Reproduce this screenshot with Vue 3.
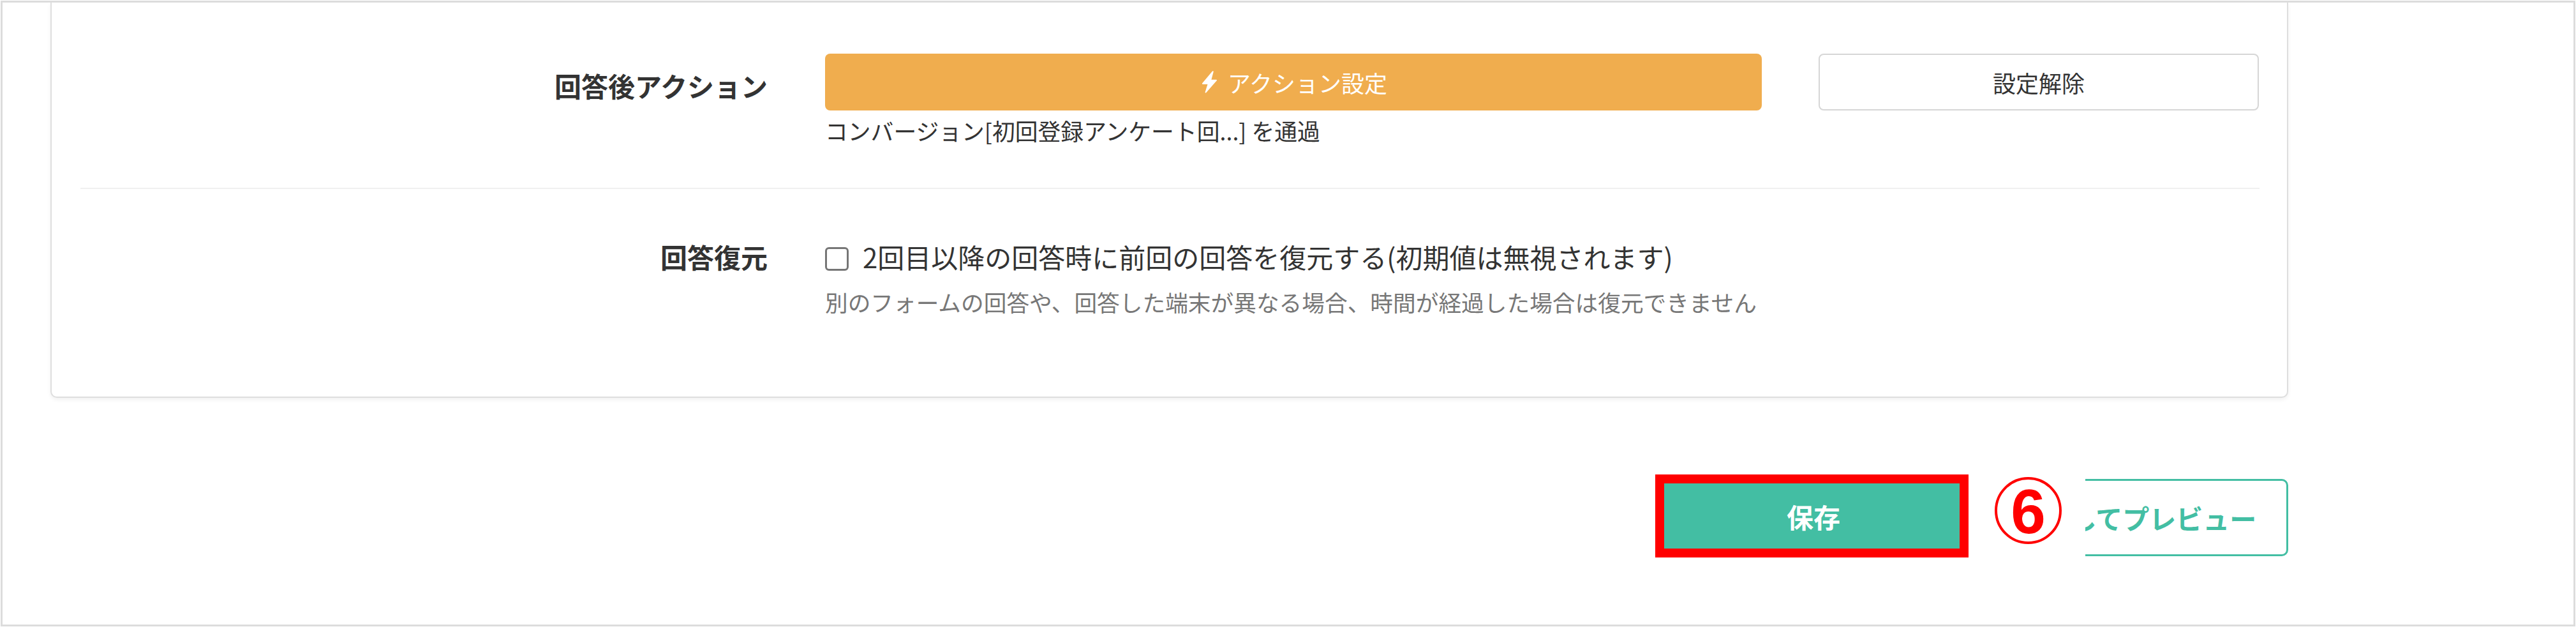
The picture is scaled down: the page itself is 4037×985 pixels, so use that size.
<script setup>
const note = '別のフォームの回答や、回答した端末が異なる場合、時間が経過した場合は復元できません'
</script>

<template>
  <div class="frame">
    <section class="card">
      <div class="row row-action">
        <div class="label label-action">回答後アクション</div>
        <div class="body">
          <div class="btns">
            <button class="btn btn-orange" type="button">
              <svg class="bolt" viewBox="45 30 70 105" aria-hidden="true">
                <polygon points="96,33 48,90 75,90 62,131 112,74 85,74" />
              </svg>
              <span>アクション設定</span>
            </button>
            <button class="btn btn-plain" type="button">設定解除</button>
          </div>
          <p class="sub">コンバージョン[初回登録アンケート回...] を通過</p>
        </div>
      </div>
      <div class="row row-restore">
        <div class="label">回答復元</div>
        <div class="body">
          <label class="check">
            <input type="checkbox" />
            <span>2回目以降の回答時に前回の回答を復元する(初期値は無視されます)</span>
          </label>
          <p class="note">{{ note }}</p>
        </div>
      </div>
    </section>

    <footer class="actions">
      <button class="save" type="button">保存</button>
      <button class="preview" type="button">保存してプレビュー</button>
      <div class="mask"><span class="num">6</span></div>
    </footer>
  </div>
</template>

<style>
html, body { margin: 0; background: #fff; }
</style>

<style scoped>
.frame {
  box-sizing: border-box;
  width: 4035px;
  height: 980px;
  margin: 1px 1px 0;
  border: 3px solid #dcdcdc;
  background: #fff;
  padding-left: 75px;
  overflow: hidden;
  font-family: "Noto Sans CJK JP", "Noto Sans", sans-serif;
  color: #333;
}
.card {
  box-sizing: border-box;
  width: 3507px;
  height: 619px;
  padding: 0 43px 0 45px;
  border: 2px solid #dedede;
  border-top: 0;
  border-radius: 0 0 10px 10px;
  box-shadow: 0 3px 6px rgba(0, 0, 0, 0.06);
  background: #fff;
}
.row {
  display: flex;
  column-gap: 90px;
}
.row-action {
  height: 210px;
  padding-top: 80px;
  border-bottom: 2px solid #f0f0f0;
}
.row-restore {
  padding-top: 76px;
}
.label {
  flex: 0 0 1077px;
  text-align: right;
  font-size: 42px;
  font-weight: 700;
  line-height: 56px;
}
.label-action {
  padding-top: 22px;
}
.row-restore .label {
  padding-top: 2px;
}
.body {
  flex: 1;
  min-width: 0;
}
.btns {
  display: flex;
  column-gap: 89px;
}
.btn {
  box-sizing: border-box;
  height: 89px;
  border-radius: 8px;
  font-family: inherit;
  font-size: 36px;
  display: flex;
  align-items: center;
  justify-content: center;
  padding: 0;
}
.btn-orange {
  flex: 0 0 1468px;
  background: #f0ad4e;
  border: 0;
  color: #fff;
  column-gap: 17px;
  padding-left: 4px;
}
.bolt {
  width: 23px;
  height: 35px;
  fill: #fff;
  stroke: #fff;
  stroke-width: 6;
  stroke-linejoin: round;
}
.btn-plain {
  flex: 0 0 690px;
  background: #fff;
  border: 2px solid #d6d6d6;
  color: #333;
}
.sub {
  margin: 6px 0 0;
  font-size: 35.8px;
  line-height: 50px;
}
.check {
  display: flex;
  align-items: center;
  column-gap: 22px;
  font-size: 42px;
  line-height: 60px;
}
.check input {
  appearance: none;
  box-sizing: border-box;
  width: 37px;
  height: 37px;
  margin: 7px 0 0;
  border: 3px solid #767676;
  border-radius: 6px;
  background: #fff;
  flex: none;
}
.note {
  margin: 16px 0 0;
  font-size: 35.7px;
  line-height: 50px;
  color: #777;
}
.actions {
  position: relative;
  box-sizing: border-box;
  width: 3507px;
  margin-top: 120px;
  display: flex;
  justify-content: flex-end;
  align-items: flex-start;
  column-gap: 25px;
}
.save {
  box-sizing: border-box;
  width: 491px;
  height: 130px;
  border: 14px solid #f00;
  background: #43bea3;
  color: #fff;
  font-family: inherit;
  font-size: 42px;
  font-weight: 700;
  padding: 0 0 0 5px;
}
.preview {
  box-sizing: border-box;
  width: 476px;
  height: 121px;
  margin-top: 7px;
  border: 3px solid #43bea3;
  border-radius: 10px;
  background: #fff;
  color: #43bea3;
  font-family: inherit;
  font-size: 42px;
  font-weight: 700;
  padding: 0;
}
.mask {
  position: absolute;
  right: 318px;
  top: 0;
  width: 183px;
  height: 132px;
  background: #fff;
  padding: 4px 0 0 41px;
  box-sizing: border-box;
}
.num {
  display: block;
  box-sizing: border-box;
  width: 105px;
  height: 105px;
  border: 4px solid #f00;
  border-radius: 50%;
  color: #f00;
  font-family: "Liberation Sans", sans-serif;
  font-weight: 700;
  font-size: 98px;
  line-height: 100px;
  text-align: center;
}
</style>
